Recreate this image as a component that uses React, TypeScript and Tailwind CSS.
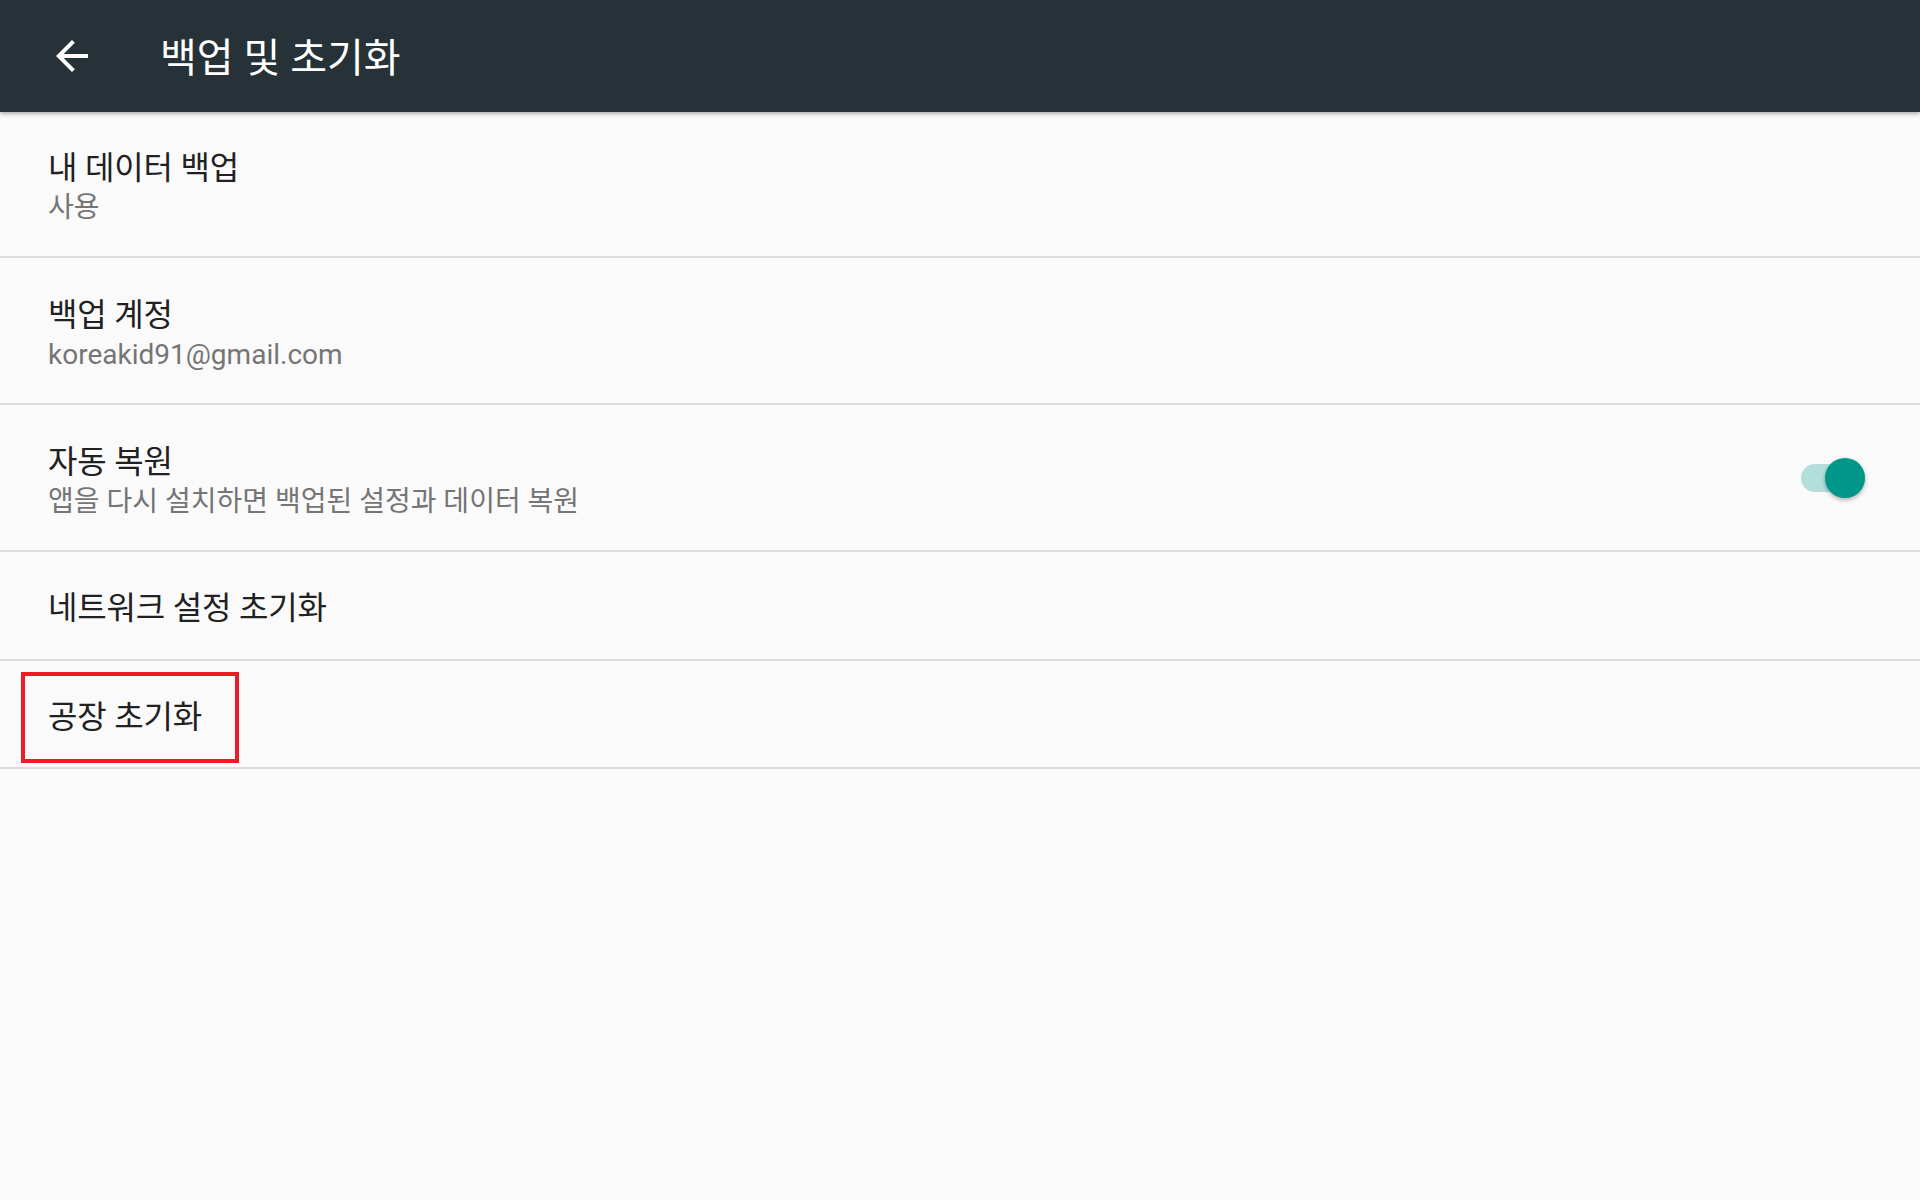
import React from "react";

const font = { fontFamily: 'Roboto, "Noto Sans CJK KR", sans-serif' };

function Item({
  title,
  summary,
  h,
  children,
}: {
  title: string;
  summary?: string;
  h: string;
  children?: React.ReactNode;
}) {
  return (
    <div className={`relative flex items-center border-b-2 border-[#dcdcdc] pl-[48px] pr-[52px] ${h}`}>
      <div className={`flex flex-1 flex-col justify-center ${summary ? "pt-[8px]" : "pt-[5px]"}`}>
        <div className="text-[32px] leading-[40px] tracking-[-0.2px] text-[#212121]">{title}</div>
        {summary && <div className="text-[28px] leading-[40px] text-[#757575]">{summary}</div>}
      </div>
      {children}
    </div>
  );
}

export default function App() {
  return (
    <div className="min-h-[1200px] w-[1920px] bg-[#fafafa]" style={font}>
      <header className="relative z-10 flex h-[112px] items-center bg-[#263238] shadow-[0_2px_4px_rgba(0,0,0,0.3)]">
        <div className="flex w-[160px] items-center pl-[48px]">
          <svg width="48" height="48" viewBox="0 0 24 24" fill="#ffffff">
            <path d="M20 11H7.83l5.59-5.59L12 4l-8 8 8 8 1.41-1.41L7.83 13H20v-2z" />
          </svg>
        </div>
        <h1 className="pt-[5px] text-[40px] leading-none text-white">백업 및 초기화</h1>
      </header>
      <Item title="내 데이터 백업" summary="사용" h="h-[146px]" />
      <Item title="백업 계정" summary="koreakid91@gmail.com" h="h-[147px]" />
      <Item title="자동 복원" summary="앱을 다시 설치하면 백업된 설정과 데이터 복원" h="h-[147px]">
        <div className="relative h-[40px] w-[70px]">
          <div className="absolute left-[3px] top-[6px] h-[28px] w-[64px] rounded-full bg-[#b2dfdb]" />
          <div className="absolute right-[3px] top-0 h-[40px] w-[40px] rounded-full bg-[#009688] shadow-[0_2px_4px_rgba(0,0,0,0.3)]" />
        </div>
      </Item>
      <Item title="네트워크 설정 초기화" h="h-[109px]" />
      <Item title="공장 초기화" h="h-[108px]">
        <div className="absolute left-[21px] top-[11px] h-[91px] w-[218px] border-[4px] border-[#ed1c24]" />
      </Item>
    </div>
  );
}
